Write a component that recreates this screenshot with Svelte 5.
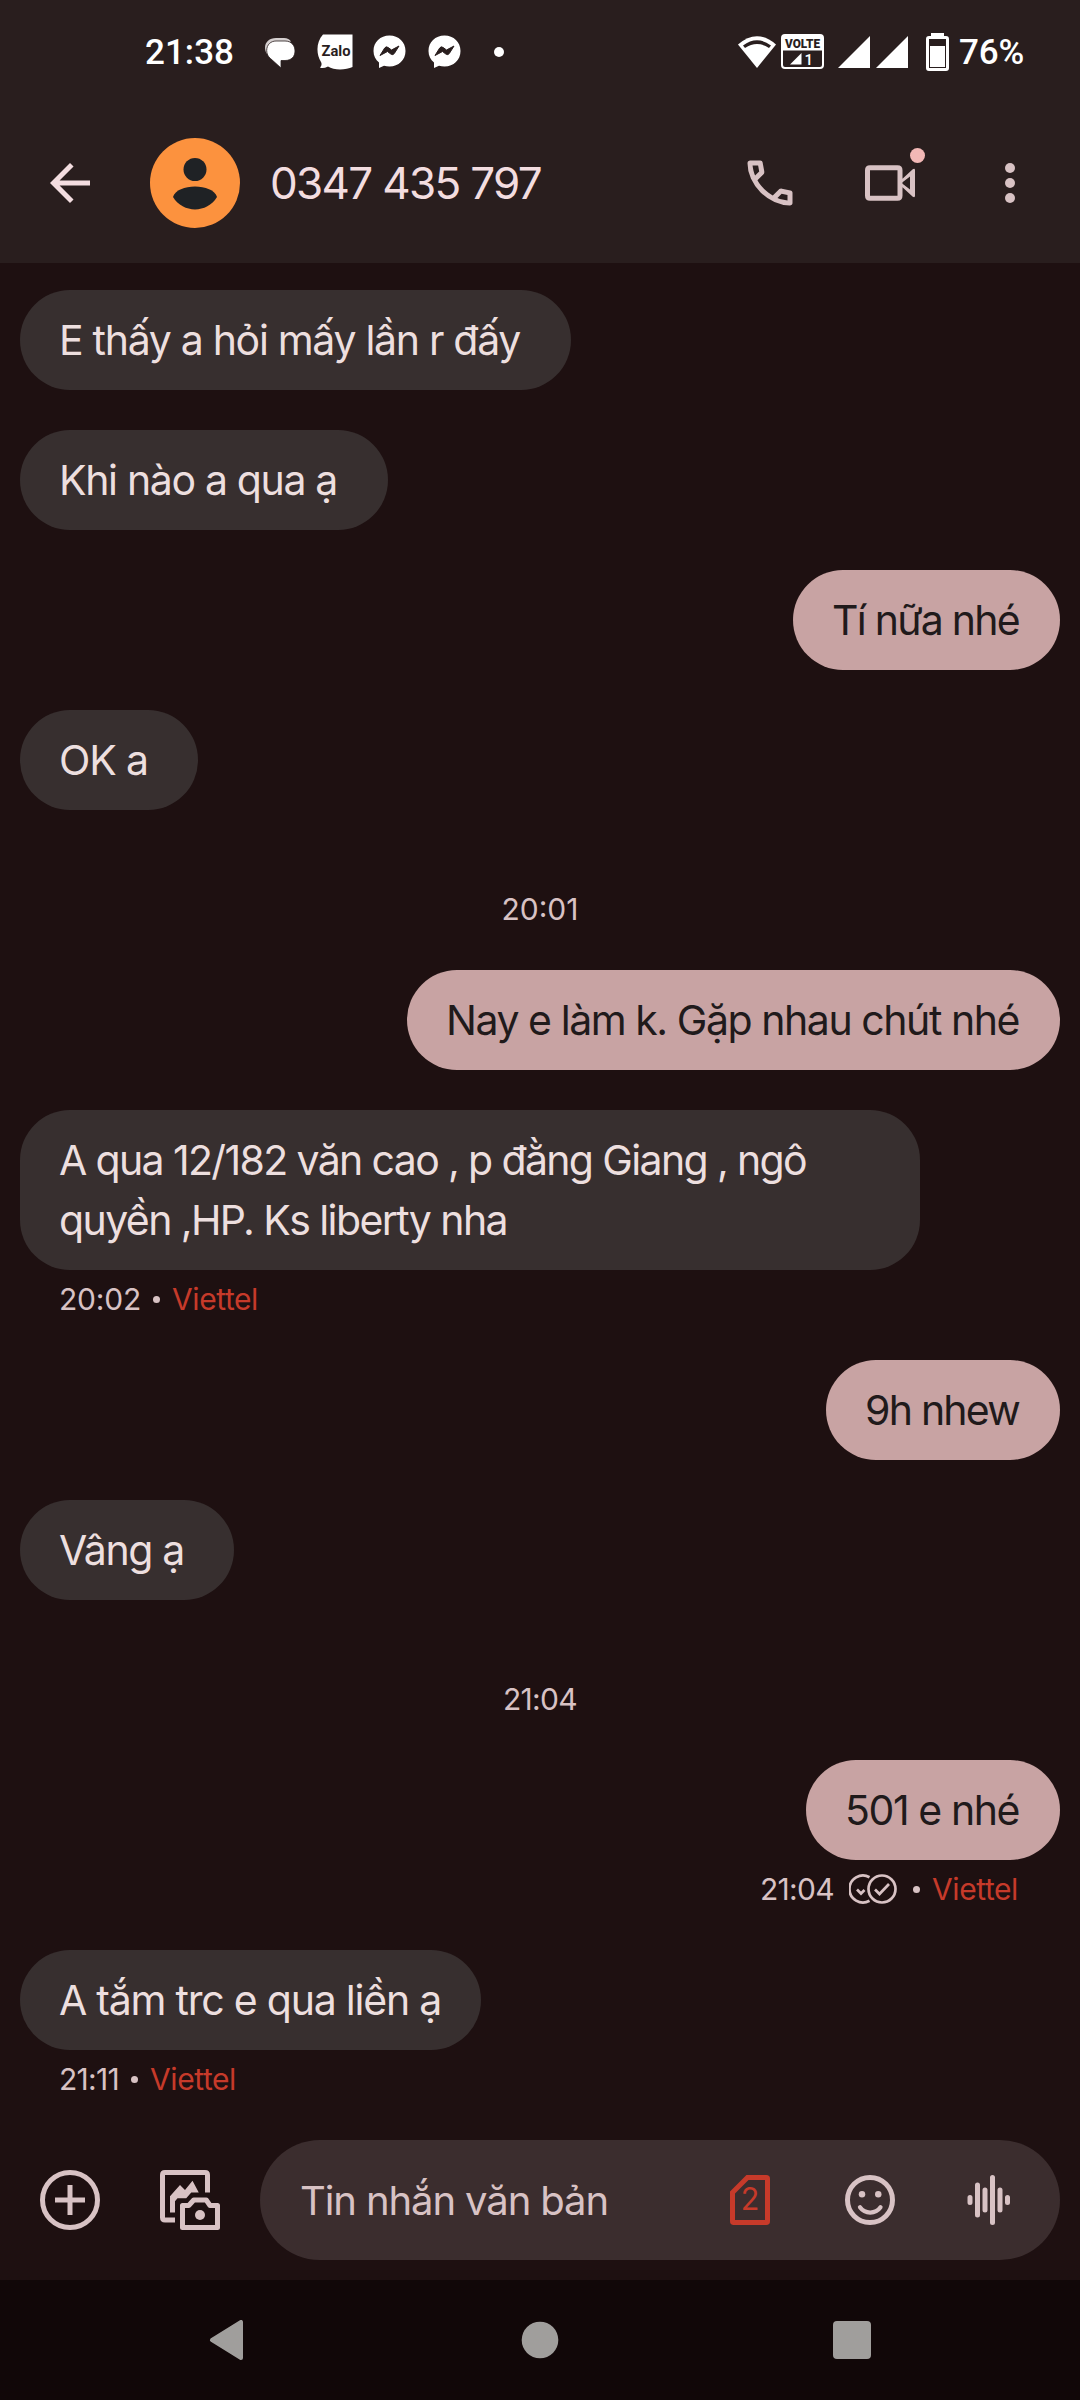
<script lang="ts">
  type Meta = { time: string; timeWidth: number; read?: boolean };
  type Line = { text: string; width: number };
  type Item =
    | { kind: 'time'; text: string; width: number }
    | { kind: 'in' | 'out'; lines: Line[]; size: number; meta?: Meta };

  const items: Item[] = [
    { kind: 'in', size: 551, lines: [{ text: 'E thấy a hỏi mấy lần r đấy', width: 461 }] },
    { kind: 'in', size: 368, lines: [{ text: 'Khi nào a qua ạ', width: 278 }] },
    { kind: 'out', size: 267, lines: [{ text: 'Tí nữa nhé', width: 187 }] },
    { kind: 'in', size: 178, lines: [{ text: 'OK a', width: 89 }] },
    { kind: 'time', text: '20:01', width: 77 },
    { kind: 'out', size: 653, lines: [{ text: 'Nay e làm k. Gặp nhau chút nhé', width: 573 }] },
    {
      kind: 'in',
      size: 900,
      lines: [
        { text: 'A qua 12/182 văn cao , p đằng Giang , ngô', width: 747 },
        { text: 'quyền ,HP. Ks liberty nha', width: 448 }
      ],
      meta: { time: '20:02', timeWidth: 82 }
    },
    { kind: 'out', size: 234, lines: [{ text: '9h nhew', width: 154 }] },
    { kind: 'in', size: 214, lines: [{ text: 'Vâng ạ', width: 125 }] },
    { kind: 'time', text: '21:04', width: 74 },
    {
      kind: 'out',
      size: 254,
      lines: [{ text: '501 e nhé', width: 174 }],
      meta: { time: '21:04', timeWidth: 74, read: true }
    },
    {
      kind: 'in',
      size: 461,
      lines: [{ text: 'A tắm trc e qua liền ạ', width: 382 }],
      meta: { time: '21:11', timeWidth: 60 }
    }
  ];

  // Tracks a run of text so that its advance equals the given width.
  function track(node: HTMLElement, width: number) {
    node.style.letterSpacing = '0px';
    const natural = node.getBoundingClientRect().width;
    const count = Array.from(node.textContent ?? '').length;
    node.style.letterSpacing = `${(width - natural) / count}px`;
  }
</script>

<div class="phone">
  <header>
    <div class="status">
      <span class="clock"><span use:track={89}>21:38</span></span>
      <svg class="chat" viewBox="0 0 31 30">
        <path d="M3 16C-2 8 3 0 12 0H20Q25 0 27 3.500L5 10Z" fill="#d5cfcf" />
        <path d="M2.700 12.500C2.700 6.500 7 3 12 3H21C27.500 3 31 7.500 31 13S27.500 22.500 21 22.500H17V30L6.500 20.500C4 18.500 2.700 16 2.700 12.500Z" fill="#fff" stroke="#291e1e" stroke-width=".8" />
      </svg>
      <svg class="zalo" viewBox="0 0 36 36">
        <path d="M6 .500H35.500V33C29 36 17 36.500 11 32.500Q6 35 3 33.500Q5.500 31 4 28C-1 20-1 8 6 .500Z" fill="#fff" />
        <text x="4.500" y="22" textLength="29" lengthAdjust="spacingAndGlyphs">Zalo</text>
      </svg>
      {#each [0, 1] as i (i)}
        <svg class="messenger" viewBox="0 0 33 33">
          <path d="M16.500.500C7.300.500.500 7.200.500 16C.500 21 2.600 24.500 6 27.500V33L11 30.800C12.800 31.300 14.500 31.500 16.500 31.500C25.700 31.500 32.500 24.800 32.500 16S25.700.500 16.500.500Z" fill="#fff" />
          <path d="M7 20.500L11.700 13Q13 11 15.200 12.500L18.500 15L26 11L21.300 18.500Q20 20.500 17.800 19L14.500 16.500Z" fill="#291e1e" stroke="#291e1e" stroke-linejoin="round" />
        </svg>
      {/each}
      <i class="more-dot"></i>
      <span class="spacer"></span>
      <svg class="wifi" viewBox="0 0 38 32">
        <path d="M0 8.500Q19-8 38 8.500L19 32Z" fill="#fff" />
        <path d="M5 9.500Q19-1 33 9.500L31 12Q19 4 7 12Z" fill="#291e1e" />
      </svg>
      <svg class="volte" viewBox="0 0 43 35">
        <rect x="1" y="1" width="41" height="33" rx="3" fill="none" stroke="#fff" stroke-width="2" />
        <path d="M1 2H42V16.500H1Z" fill="#fff" />
        <text class="dark" x="4" y="13.500" textLength="35" lengthAdjust="spacingAndGlyphs">VOLTE</text>
        <path d="M9 30.500L20.500 19V30.500Z" fill="#fff" />
        <text class="one" x="23.500" y="30.500">1</text>
      </svg>
      <svg class="signals" viewBox="0 0 70 32">
        <path d="M0 32L32 0V32ZM38 32L70 0V32Z" fill="#fff" />
      </svg>
      <svg class="battery" viewBox="0 0 23 38">
        <path d="M5 0H18V3H5Z" fill="#fff" />
        <rect x="1.500" y="4.500" width="20" height="32" rx="1.500" fill="none" stroke="#fff" stroke-width="3" />
        <path d="M4 13H19V34H4Z" fill="#fff" />
      </svg>
      <span class="percent"><span use:track={65}>76%</span></span>
    </div>

    <div class="toolbar">
      <svg class="icon back" viewBox="0 0 24 24">
        <path d="M20 11H7.830l5.590-5.590L12 4l-8 8 8 8 1.410-1.410L7.830 13H20z" />
      </svg>
      <svg class="avatar" viewBox="0 0 90 90">
        <circle cx="45" cy="45" r="45" fill="#fc923e" />
        <circle cx="45" cy="31.500" r="11.500" fill="#1f2225" />
        <path d="M23 59C27 45 63 45 67 59C57 75.500 33 75.500 23 59Z" fill="#1f2225" />
      </svg>
      <h1><span use:track={271}>0347 435 797</span></h1>
      <svg class="icon" viewBox="0 0 24 24">
        <path d="M19.950 21q-3.125 0-6.175-1.363t-5.550-3.862q-2.500-2.500-3.862-5.550T3 4.050q0-.450.300-.750t.750-.300H8.100q.350 0 .625.238t.325.562l.650 3.500q.050.400-.025.675T9.400 8.450L6.975 10.900q.500.925 1.187 1.787t1.513 1.663q.775.775 1.625 1.438T13.100 17l2.350-2.350q.225-.225.588-.338t.712-.062l3.450.700q.350.100.575.363T21 15.900v4.050q0 .450-.300.750t-.750.300M6.025 9l1.650-1.650L7.250 5H5.025q.125 1.025.350 2.025T6.025 9m8.950 8.950q.975.425 1.988.675T19 18.950v-2.200l-2.350-.475z" />
      </svg>
      <div class="video">
        <svg class="icon" viewBox="0 0 24 24">
          <path d="M4 4.900H15Q17 4.900 17 6.900V10.300L21.100 6.500Q22 6 22 6.900V17.100Q22 18 21.100 17.500L17 13.700V17.100Q17 19.100 15 19.100H4Q2 19.100 2 17.100V6.900Q2 4.900 4 4.900ZM4 6.900V17.100H15V6.900ZM17 11.700V12.300L20 14.600V9.400Z" fill-rule="evenodd" />
        </svg>
        <i class="badge"></i>
      </div>
      <svg class="icon" viewBox="0 0 24 24">
        <circle cx="12" cy="6" r="2" /><circle cx="12" cy="12" r="2" /><circle cx="12" cy="18" r="2" />
      </svg>
    </div>
  </header>

  <main>
    {#each items as item, i (i)}
      {#if item.kind === 'time'}
        <div class="divider"><span use:track={item.width}>{item.text}</span></div>
      {:else}
        <section class={item.kind}>
          <div class="bubble" style:width="{item.size}px">
            {#each item.lines as line (line.text)}
              <p><span use:track={line.width}>{line.text}</span></p>
            {/each}
          </div>
          {#if item.meta}
            <div class="meta">
              <span use:track={item.meta.timeWidth}>{item.meta.time}</span>
              {#if item.meta.read}
                <svg class="read" viewBox="0 0 48 30">
                  <path d="M20.500 3.200A13.500 13.500 0 1 0 20.500 26.800M8 15.500L12 19.500L15.500 16" />
                  <circle cx="33" cy="15" r="13.500" />
                  <path d="M26 15.500L30.500 20L40 10" />
                </svg>
              {/if}
              <i></i>
              <span class="carrier" use:track={86}>Viettel</span>
            </div>
          {/if}
        </section>
      {/if}
    {/each}
  </main>

  <div class="compose">
    <svg class="icon" viewBox="0 0 24 24">
      <path d="M12 1A11 11 0 1 1 12 23A11 11 0 1 1 12 1ZM12 6V18M6 12H18" fill="none" stroke="#d8c2c4" stroke-width="2" />
    </svg>
    <svg class="icon" viewBox="0 0 24 24">
      <path d="M6 20H2Q1 20 1 19V2Q1 1 2 1H18Q19 1 19 2V9" fill="none" stroke="#d8c2c4" stroke-width="2" />
      <path d="M4 17V10.500L8 6L10 8L13 4.300L15.500 9H12.500L10.500 11.300H7L6 12.500V17Z" />
      <path d="M9 14.200H11.500L13.500 12H18.500L20 14.200H23V23H9Z" fill="none" stroke="#d8c2c4" stroke-width="2" stroke-linejoin="round" />
      <circle cx="16" cy="18" r="2" />
    </svg>
    <div class="field">
      <span class="hint"><span use:track={308}>Tin nhắn văn bản</span></span>
      <svg class="icon sim" viewBox="0 0 24 24">
        <path d="M11 3H18.500Q19 3 19 3.500V20.500Q19 21 18.500 21H5.500Q5 21 5 20.500V9Z" fill="none" stroke="#c63a2a" stroke-width="2" />
        <text x="12" y="16" text-anchor="middle">2</text>
      </svg>
      <svg class="icon" viewBox="0 0 24 24">
        <circle cx="12" cy="12" r="9" fill="none" stroke="#d8c2c4" stroke-width="2" />
        <circle cx="8.800" cy="9.700" r="1.300" /><circle cx="15.300" cy="9.700" r="1.300" />
        <path d="M8 14.900C10 17.700 14.200 17.700 16.200 14.900" fill="none" stroke="#d8c2c4" stroke-width="1.700" stroke-linecap="round" />
      </svg>
      <svg class="icon" viewBox="0 0 24 24">
        <path d="M4 11V13M7 6V18M10 8V16M13 3V21M16 8V16M19 11V13" fill="none" stroke="#d8c2c4" stroke-width="2" stroke-linecap="round" />
      </svg>
    </div>
  </div>

  <nav>
    <svg viewBox="0 0 40 40"><path d="M33 2V38L4 20Z" stroke-width="4" stroke-linejoin="round" /></svg>
    <svg viewBox="0 0 40 40"><circle cx="20" cy="20" r="18.300" stroke="none" /></svg>
    <svg viewBox="0 0 40 40"><rect x="1" y="1" width="38" height="38" rx="4" stroke="none" /></svg>
  </nav>
</div>

<style>
  .phone {
    width: 1080px;
    height: 2400px;
    display: flex;
    flex-direction: column;
    background: #1e1011;
    font-family: Inter, 'Open Sans', sans-serif;
    color: #d8c2c4;
    overflow: hidden;
  }
  svg { display: block; flex: none; }
  span { white-space: pre; }
  header { height: 263px; flex: none; background: #291e1e; }

  .status {
    display: flex;
    align-items: center;
    height: 103px;
    padding: 0 55px 0 145px;
    color: #fff;
    font: 500 35px/40px Roboto, sans-serif;
  }
  .clock { width: 119px; padding-top: 3px; }
  .percent { width: 66px; margin-left: 10px; padding-top: 3px; }
  .chat { width: 31px; height: 30px; margin: 2px 22px 0 0; }
  .zalo { width: 36px; height: 36px; margin-right: 20px; }
  .zalo text { font: 700 14px Roboto, sans-serif; fill: #291e1e; }
  .messenger { width: 33px; height: 33px; margin-right: 22px; }
  .more-dot { width: 10px; height: 10px; margin-left: 11px; border-radius: 50%; background: #fff; }
  .spacer { flex: 1; }
  .wifi { width: 38px; height: 32px; }
  .volte { width: 43px; height: 35px; margin-left: 5px; }
  .volte .dark { font: 900 12.5px Roboto, sans-serif; fill: #291e1e; }
  .volte .one { font: 500 15px Roboto, sans-serif; fill: #fff; }
  .signals { width: 70px; height: 32px; margin-left: 14px; }
  .battery { width: 23px; height: 38px; margin-left: 18px; }

  .toolbar { display: flex; align-items: center; height: 160px; padding: 0 40px; }
  .icon { width: 60px; height: 60px; fill: #d8c2c4; }
  .icon.back { fill: #f3dde0; }
  .avatar { width: 90px; height: 90px; margin: 0 30px 0 50px; }
  h1 { flex: 1; margin: 0; font-size: 44px; font-weight: 400; color: #f3dde0; }
  .video { position: relative; margin: 0 60px; }
  .badge {
    position: absolute;
    top: -5px;
    right: -5px;
    width: 15px;
    height: 15px;
    border-radius: 50%;
    background: #f2b8b6;
  }

  main {
    display: flex;
    flex-direction: column;
    gap: 40px;
    height: 1857px;
    flex: none;
    padding: 27px 20px 0;
    box-sizing: border-box;
  }
  section { display: flex; flex-direction: column; align-items: flex-start; }
  .out { align-items: flex-end; }
  .bubble {
    box-sizing: border-box;
    padding: 20px 0 20px 39px;
    border-radius: 50px;
    background: #372f2f;
    color: #eddfdf;
    font-size: 41px;
    line-height: 60px;
  }
  .out .bubble { background: #c8a3a3; color: #201a1b; }
  p { margin: 0; height: 60px; }
  .divider {
    height: 80px;
    box-sizing: border-box;
    padding-top: 38px;
    text-align: center;
    font-size: 30px;
    line-height: 42px;
  }
  .meta {
    display: flex;
    align-items: center;
    height: 50px;
    box-sizing: border-box;
    padding: 8px 42px 0 39px;
    font-size: 30px;
    line-height: 42px;
  }
  .meta i { width: 7px; height: 7px; margin: 0 12px 0 12px; border-radius: 50%; background: #d8c2c4; }
  .read {
    width: 48px;
    height: 30px;
    margin: 0 4px 0 15px;
    fill: none;
    stroke: #d8c2c4;
    stroke-width: 2.700;
  }
  .carrier { color: #c63a2a; }

  .compose { display: flex; align-items: center; height: 160px; flex: none; padding: 0 20px 0 40px; }
  .compose > .icon { margin-right: 60px; }
  .compose > .icon + .icon { margin-right: 40px; }
  .field {
    display: flex;
    align-items: center;
    width: 800px;
    height: 120px;
    padding: 0 40px;
    box-sizing: border-box;
    border-radius: 60px;
    background: #3b2d2e;
  }
  .field .icon + .icon { margin-left: 60px; }
  .hint { flex: 1; font-size: 40px; }
  .sim text { font: 12.200px Inter, sans-serif; fill: #c63a2a; }

  nav { display: flex; align-items: center; justify-content: center; gap: 272px; flex: 1; background: #110708; }
  nav svg { width: 40px; height: 40px; fill: #a09e9c; stroke: #a09e9c; }
</style>
